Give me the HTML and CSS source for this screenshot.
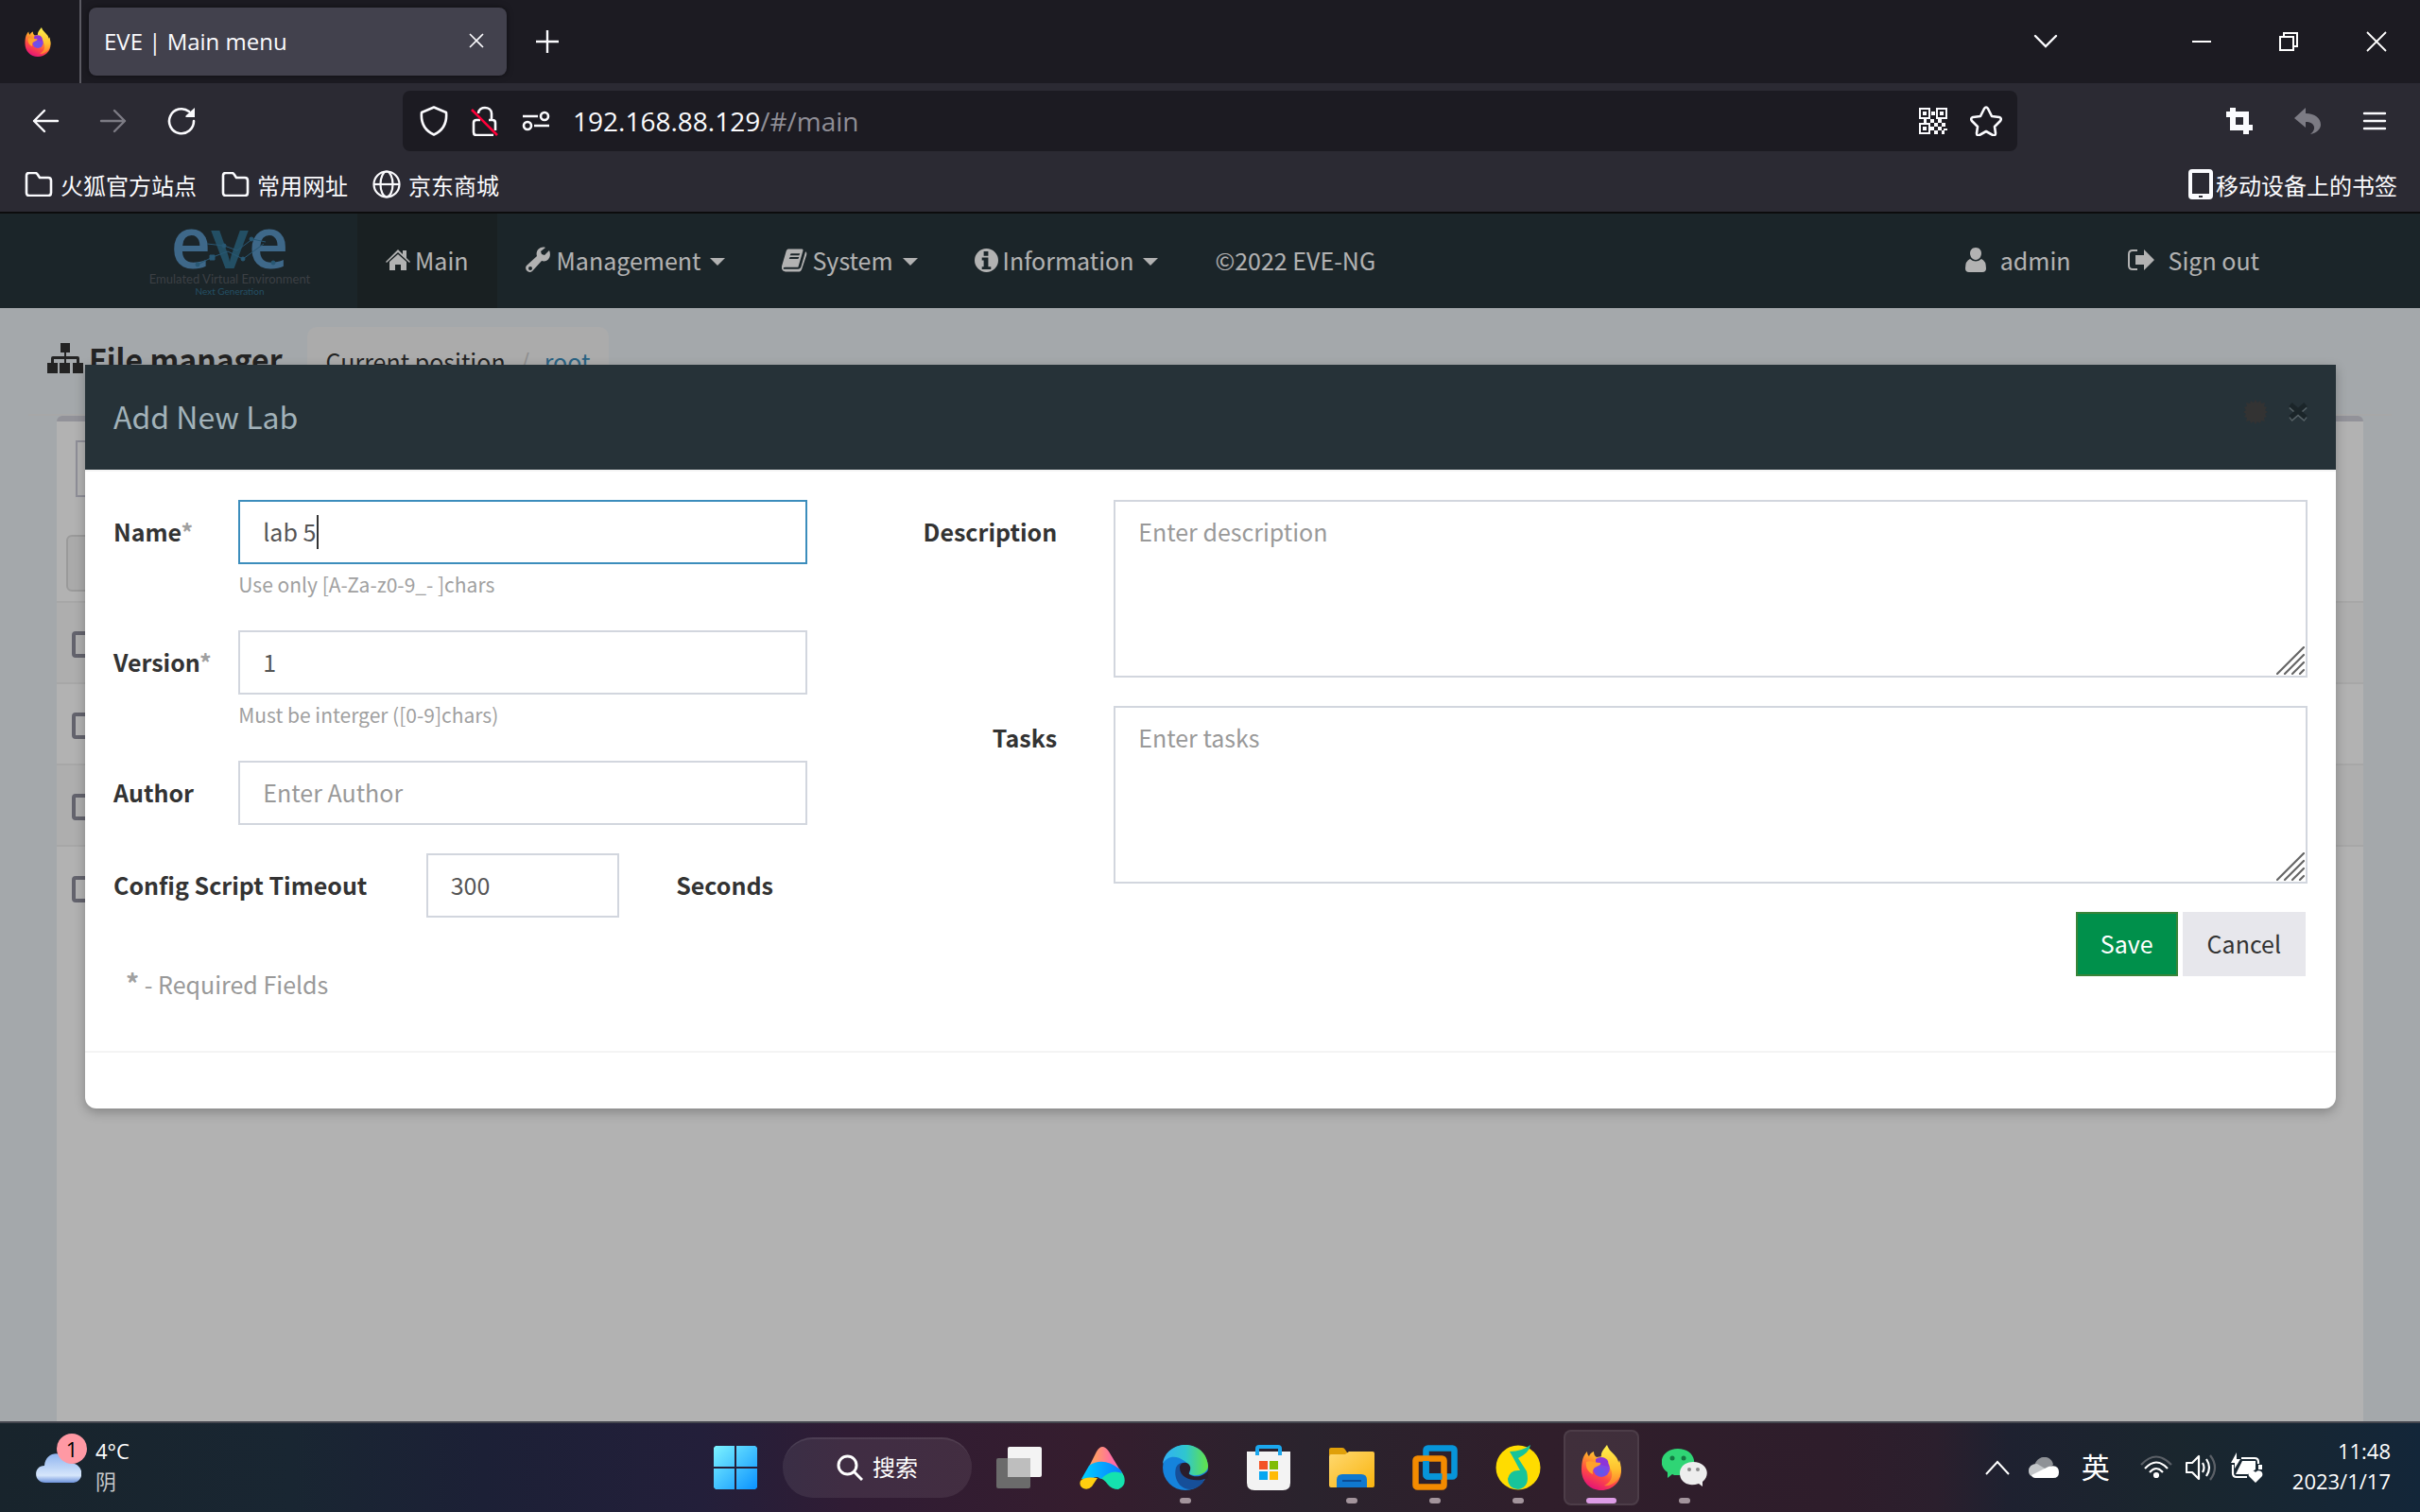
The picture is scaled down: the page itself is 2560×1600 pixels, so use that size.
FILE: index.html
```html
<!DOCTYPE html>
<html lang="en">
<head>
    <meta charset="UTF-8">
    <meta name="viewport" content="width=device-width, initial-scale=1.0">
    <title>EVE | Main menu</title>
    <link rel="stylesheet" href="styles.css">
</head>
<body>
    <svg width="0" height="0" class="defs" aria-hidden="true">
        <defs>
            <linearGradient id="fox-body" x1="0.8" y1="0" x2="0.3" y2="1">
                <stop offset="0" stop-color="#fff44f"/>
                <stop offset="0.35" stop-color="#ffa02a"/>
                <stop offset="0.65" stop-color="#ff4a45"/>
                <stop offset="1" stop-color="#e3107a"/>
            </linearGradient>
            <linearGradient id="fox-flame" x1="0.5" y1="0" x2="0.5" y2="1">
                <stop offset="0" stop-color="#fff14d"/>
                <stop offset="0.6" stop-color="#ffc02e"/>
                <stop offset="1" stop-color="#ff7a30"/>
            </linearGradient>
            <radialGradient id="fox-globe" cx="0.5" cy="0.7" r="0.7">
                <stop offset="0" stop-color="#5b5bea"/>
                <stop offset="1" stop-color="#a234e0"/>
            </radialGradient>
            <symbol id="firefox" viewBox="0 0 42 48">
                <path fill="url(#fox-body)" d="M3 11c1-2 2-3 3-4 0 3 1 4 2 5 1-3 3-4 5-5 0 3 1 5 3 6l12-2C35 14 42 18 42 27c0 12-9 21-21 21S0 39 0 26C0 20 1 14 3 11z"/>
                <path fill="url(#fox-flame)" d="M27 0c2 6 6 8 9 12 2 2 3 5 3 7l1-3c3 8 2 17-3 22-4 4-9 6-13 5 6-3 9-8 8-14-1-7-9-9-11-16C20 8 24 4 27 0z"/>
                <circle cx="21" cy="25" r="9" fill="url(#fox-globe)"/>
                <path fill="#8d35d8" d="M15 15c4-3 10-3 13 2l1 6-14-3z"/>
                <path fill="#ffa12b" d="M5 18c5-2 9 1 15 1 1 2-2 3-4 4-3 1-5 4-4 8-5-2-8-7-7-13z"/>
            </symbol>
        </defs>
    </svg>

    <!-- Browser chrome -->
    <header class="browser">
        <div class="tab-bar">
            <div class="tab-pin"><svg width="30" height="31"><use href="#firefox"/></svg></div>
            <div class="tab">
                <span>EVE | Main menu</span>
                <button class="icon-button" aria-label="Close tab"><svg width="16" height="16" viewBox="0 0 16 16" stroke="#fbfbfe" stroke-width="1.6"><path d="M1 1l14 14M15 1L1 15"/></svg></button>
            </div>
            <button class="icon-button new-tab" aria-label="New tab"><svg width="24" height="24" viewBox="0 0 24 24" stroke="#fbfbfe" stroke-width="2.4"><path d="M12 0v24M0 12h24"/></svg></button>
            <div class="window-buttons">
                <button class="icon-button list-tabs" aria-label="List all tabs"><svg width="26" height="26" viewBox="0 0 26 26" fill="none" stroke="#fbfbfe" stroke-width="2.4" stroke-linecap="round"><path d="M2 7l11 11L24 7"/></svg></button>
                <button class="icon-button" aria-label="Minimize"><svg width="20" height="20" viewBox="0 0 20 20"><path fill="#fff" d="M0 9h20v2H0z"/></svg></button>
                <button class="icon-button" aria-label="Restore"><svg width="20" height="20" viewBox="0 0 20 20" fill="none" stroke="#fff" stroke-width="2"><path d="M1 5h14v14H1zM5 5V1h14v14h-4"/></svg></button>
                <button class="icon-button" aria-label="Close"><svg width="22" height="22" viewBox="0 0 22 22" stroke="#fff" stroke-width="1.8"><path d="M1 1l20 20M21 1L1 21"/></svg></button>
            </div>
        </div>

        <div class="toolbar">
            <div class="nav-buttons">
                <button class="icon-button" aria-label="Back"><svg width="30" height="26" viewBox="0 0 30 26" fill="none" stroke="#fbfbfe" stroke-width="2.4" stroke-linecap="round" stroke-linejoin="round"><path d="M14 2L3 13l11 11M3 13h25"/></svg></button>
                <button class="icon-button" aria-label="Forward"><svg width="30" height="26" viewBox="0 0 30 26" fill="none" stroke="#7c7b84" stroke-width="2.4" stroke-linecap="round" stroke-linejoin="round"><path d="M16 2l11 11-11 11M27 13H2"/></svg></button>
                <button class="icon-button" aria-label="Reload"><svg width="30" height="30" viewBox="0 0 30 30" fill="none" stroke="#fbfbfe" stroke-width="2.6" stroke-linecap="round"><path d="M28 15a13 13 0 1 1-5-10"/><path fill="#fbfbfe" stroke="none" d="M29 1v10h-9c-1 0-1-1 0-2z"/></svg></button>
            </div>
            <div class="url-bar">
                <svg width="30" height="32" viewBox="0 0 30 32" fill="none" stroke="#fbfbfe" stroke-width="2.6" stroke-linejoin="round"><path d="M15 1.500L28 7c1 11-3 19-13 23.500C5 26 1 18 2 7z"/></svg>
                <svg width="30" height="32" viewBox="0 0 30 32" fill="none" stroke="#fbfbfe" stroke-width="2.6"><path d="M8 8c0-8 14-8 14 0v6M26 26V18c0-2-1-3-3-3h-4M10 15H6c-2 0-3 1-3 3v10c0 2 1 3 3 3h18"/><path stroke="#ff0039" d="M1 4l27 27"/></svg>
                <svg width="30" height="22" viewBox="0 0 30 22" fill="none" stroke="#fbfbfe" stroke-width="2.6"><path d="M1 6h16M13 16h16"/><circle cx="24" cy="6" r="4"/><circle cx="6" cy="16" r="4"/></svg>
                <span class="url">192.168.88.129<span>/#/main</span></span>
                <svg width="30" height="28" viewBox="0 0 30 28" fill="#fbfbfe"><path fill-rule="evenodd" d="M0 0h12v12H0zM2 2v8h8V2zM4 4h4v4H4zM18 0h12v12H18zM20 2v8h8V2zM22 4h4v4h-4zM0 16h12v12H0zM2 18v8h8v-8zM4 20h4v4H4z"/><path d="M13 4h4v4h-4zM5 12h3v4H5zM12 12h4v4h-4zM20 12h4v4h-4zM16 16h4v4h-4zM24 16h4v4h-4zM12 20h4v4h-4zM20 20h4v4h-4zM16 24h4v4h-4zM26 22h4v2h-4zM24 24h3v4h-3z"/></svg>
                <svg width="34" height="32" viewBox="0 0 34 32" fill="none" stroke="#fbfbfe" stroke-width="2.6" stroke-linejoin="round"><path d="M15 3q2-3 4 0l4 8 8 1q3 1 1 4l-6 6 1 7q0 3-3 2l-7-4-7 4q-3 1-3-2l1-7-6-6q-2-3 1-4l8-1z"/></svg>
            </div>
            <div class="tool-buttons">
                <button class="icon-button" aria-label="Crop"><svg width="28" height="28" viewBox="0 0 28 28" fill="#fbfbfe" fill-rule="evenodd"><path d="M4 0h6v4h14v14h4v6h-4v4h-6v-4H4V10H0V4h4zM10 10v8h8v-8z"/></svg></button>
                <button class="icon-button" aria-label="Undo"><svg width="28" height="28" viewBox="0 0 28 28" fill="#7c7b84"><path d="M12 0v6c10 0 16 5 16 12 0 5-5 9-11 10 7-5 5-13-5-13v6L0 11z"/></svg></button>
                <button class="icon-button" aria-label="Menu"><svg width="26" height="22" viewBox="0 0 26 22" stroke="#fbfbfe" stroke-width="2.4" stroke-linecap="round"><path d="M2 3h22M2 11h22M2 19h22"/></svg></button>
            </div>
        </div>

        <nav class="bookmarks">
            <a href="#"><svg width="30" height="26" viewBox="0 0 30 26" fill="none" stroke="#fbfbfe" stroke-width="2.6" stroke-linejoin="round"><path d="M2 4q0-3 3-3h6q2 0 3 2l2 3h9q3 0 3 3v13q0 3-3 3H5q-3 0-3-3z"/></svg>火狐官方站点</a>
            <a href="#"><svg width="30" height="26" viewBox="0 0 30 26" fill="none" stroke="#fbfbfe" stroke-width="2.6" stroke-linejoin="round"><path d="M2 4q0-3 3-3h6q2 0 3 2l2 3h9q3 0 3 3v13q0 3-3 3H5q-3 0-3-3z"/></svg>常用网址</a>
            <a href="#"><svg width="30" height="30" viewBox="0 0 30 30" fill="none" stroke="#fbfbfe" stroke-width="2.2"><circle cx="15" cy="15" r="13.500"/><ellipse cx="15" cy="15" rx="6.500" ry="13.500"/><path d="M2 15h26"/></svg>京东商城</a>
            <a href="#" class="mobile"><svg width="26" height="32" viewBox="0 0 26 32" fill="#fbfbfe" fill-rule="evenodd"><path d="M4 0h18q4 0 4 4v24q0 4-4 4H4q-4 0-4-4V4q0-4 4-4zM4 4v22h18V4zM11 28v2h4v-2z"/></svg>移动设备上的书签</a>
        </nav>
    </header>

    <!-- EVE-NG page -->
    <main class="page">
        <nav class="navbar">
            <a href="#" class="brand">
                <span class="brand-name">e<span>v</span>e
                    <svg class="brand-net" width="124" height="44" viewBox="0 0 124 44" fill="#3a7ea6" stroke="#3a7ea6"><path fill="none" d="M38 12l18 2 14 5 16-12 14 3M44 26l16-6 16 8 22-16M28 34l16-8"/><circle cx="56" cy="14" r="2"/><circle cx="85" cy="7" r="2"/><circle cx="76" cy="28" r="2"/><path d="M41 24h5v5h-5z"/><circle cx="28" cy="34" r="2"/><circle cx="108" cy="32" r="2"/></svg>
                </span>
                <span class="brand-line">Emulated Virtual Environment</span>
                <span class="brand-sub">Next Generation</span>
            </a>
            <a href="#" class="nav-item active"><svg width="26" height="22" viewBox="0 0 26 22"><path d="M13 0l5 5V1h4v8l4 4-1 1L13 3 1 14l-1-1zM13 5l9 8v9h-6v-6h-6v6H4v-9z"/></svg>Main</a>
            <a href="#" class="nav-item"><svg width="28" height="28" viewBox="0 0 28 28"><path fill-rule="evenodd" d="M25 4l-5 5-3-1-1-3 5-4c-5-2-11 3-9 9L1 20c-3 4 2 9 6 6l10-11c6 2 11-4 8-11zM5 21a2 2 0 1 1 0 4 2 2 0 0 1 0-4z"/></svg>Management<i class="caret"></i></a>
            <a href="#" class="nav-item"><svg width="27" height="26" viewBox="0 0 28 26"><path fill-rule="evenodd" d="M7 1h15q2 0 1 3l-5 17H4q-3 0-2 2h16q2 0 3-2l5-17q2 1 1 4l-5 15q-1 3-4 3H4q-5-1-4-6L5 3q1-2 2-2zM10 6l-1 2h10l1-2zM9 10l-1 2h10l1-2z"/></svg>System<i class="caret"></i></a>
            <a href="#" class="nav-item"><svg width="25" height="25" viewBox="0 0 26 26"><path fill-rule="evenodd" d="M13 0a13 13 0 1 1 0 26 13 13 0 0 1 0-26zM10 3v5h5V3zM8 10v3h2v7H8v3h10v-3h-3V10z"/></svg>Information<i class="caret"></i></a>
            <a href="#" class="nav-item">©2022 EVE-NG</a>
            <a href="#" class="nav-item user"><svg width="22" height="26" viewBox="0 0 22 26"><path d="M11 0c4 0 6 3 6 6s-2 7-6 7-6-4-6-7 2-6 6-6zM5 12q6 5 12 0 5 2 5 10 0 4-4 4H4q-4 0-4-4Q0 14 5 12z"/></svg>admin</a>
            <a href="#" class="nav-item user"><svg width="28" height="22" viewBox="0 0 28 22"><path d="M10 0v2H5Q2 2 2 5v12q0 3 3 3h5v2H5q-5 0-5-5V5q0-5 5-5zM17 0l11 11-11 11v-6H8V6h9z"/></svg>Sign out</a>
        </nav>

        <section class="content">
            <div class="content-header">
                <h1><svg width="38" height="33" viewBox="0 0 38 33"><path d="M14 0h10v10h-4v4h12q2 0 2 2v5h4v11H27V21h4v-4H20v4h4v11H13V21h5v-4H7v4h4v11H0V21h4v-5q0-2 2-2h12v-4h-4z"/></svg>File manager</h1>
                <div class="breadcrumb">Current position <span>/</span> <a href="#">root</a></div>
            </div>
            <div class="box">
                <div class="box-tools">
                    <input type="text" class="folder-name" aria-label="Folder name">
                </div>
                <button class="folder-button" aria-label="Folder actions"></button>
                <table class="files">
                    <tr><td><input type="checkbox" aria-label="Select item 1"></td></tr>
                    <tr><td><input type="checkbox" aria-label="Select item 2"></td></tr>
                    <tr><td><input type="checkbox" aria-label="Select item 3"></td></tr>
                    <tr><td><input type="checkbox" aria-label="Select item 4"></td></tr>
                </table>
            </div>
        </section>

        <!-- Add lab dialog -->
        <div class="backdrop">
            <div class="modal" role="dialog" aria-labelledby="modal-title">
                <div class="modal-header">
                    <h2 id="modal-title">Add New Lab</h2>
                    <div class="modal-icons">
                        <button class="icon-button" aria-label="Opacity"><svg width="26" height="26" viewBox="0 0 26 26" fill="#333"><path d="M13 0l2 3 3-2 1 3 4-1-1 4 3 1-2 3 3 2-3 2 2 3-3 1 1 4-4-1-1 3-3-2-2 3-2-3-3 2-1-3-4 1 1-4-3-1 2-3-3-2 3-2-2-3 3-1-1-4 4 1 1-3 3 2z"/></svg></button>
                        <button class="icon-button" aria-label="Close dialog"><svg width="20" height="22" viewBox="0 0 20 22" fill="none"><path stroke="#576267" stroke-width="5" d="M2 5l16 14M18 5L2 19"/><path stroke="#1b2529" stroke-width="5" d="M2 3l16 14M18 3L2 17"/></svg></button>
                    </div>
                </div>
                <form class="modal-body">
                    <div class="col-left">
                        <div class="row">
                            <label for="lab-name">Name<span class="star">*</span></label>
                            <div class="field wide">
                                <input type="text" id="lab-name" class="focused" value="lab 5">
                                <i class="text-cursor"></i>
                                <small>Use only [A-Za-z0-9_- ]chars</small>
                            </div>
                        </div>
                        <div class="row">
                            <label for="lab-version">Version<span class="star">*</span></label>
                            <div class="field wide">
                                <input type="text" id="lab-version" value="1">
                                <small>Must be interger ([0-9]chars)</small>
                            </div>
                        </div>
                        <div class="row">
                            <label for="lab-author">Author</label>
                            <div class="field wide"><input type="text" id="lab-author" placeholder="Enter Author"></div>
                        </div>
                        <div class="row">
                            <label for="lab-timeout" class="label-timeout">Config Script Timeout</label>
                            <div class="field narrow"><input type="text" id="lab-timeout" value="300"></div>
                            <span class="unit">Seconds</span>
                        </div>
                        <p class="required"><span class="star">*</span> - Required Fields</p>
                    </div>
                    <div class="col-right">
                        <div class="row">
                            <label for="lab-description">Description</label>
                            <div class="field wide">
                                <textarea id="lab-description" placeholder="Enter description"></textarea>
                                <svg class="grip" width="30" height="30" viewBox="0 0 30 30" stroke="#666" stroke-width="2.2" stroke-linecap="round"><path d="M1 29L29 1M9 29L29 9M17 29l12-12M25 29l4-4"/></svg>
                            </div>
                        </div>
                        <div class="row">
                            <label for="lab-tasks">Tasks</label>
                            <div class="field wide">
                                <textarea id="lab-tasks" placeholder="Enter tasks"></textarea>
                                <svg class="grip" width="30" height="30" viewBox="0 0 30 30" stroke="#666" stroke-width="2.2" stroke-linecap="round"><path d="M1 29L29 1M9 29L29 9M17 29l12-12M25 29l4-4"/></svg>
                            </div>
                        </div>
                        <div class="actions">
                            <button type="button" class="btn btn-save">Save</button>
                            <button type="button" class="btn btn-cancel">Cancel</button>
                        </div>
                    </div>
                </form>
                <div class="modal-footer"></div>
            </div>
        </div>
    </main>

    <!-- Windows taskbar -->
    <footer class="taskbar">
        <div class="weather">
            <div class="weather-icon">
                <svg width="48" height="32" viewBox="0 0 48 32">
                    <defs><linearGradient id="cloud" x1="0" y1="0" x2="0" y2="1"><stop offset="0" stop-color="#8fb4ef"/><stop offset="0.75" stop-color="#d6e6fb"/><stop offset="1" stop-color="#6d93dc"/></linearGradient></defs>
                    <path fill="url(#cloud)" d="M10 32C-3 32-3 14 9 14 10-2 30-3 33 11c19-2 20 21 5 21z"/>
                </svg>
                <span class="badge">1</span>
            </div>
            <div class="weather-text"><div>4°C</div><div class="dim">阴</div></div>
        </div>

        <div class="apps">
            <button class="app" aria-label="Start"><svg width="46" height="46" viewBox="0 0 46 46">
                <defs><linearGradient id="win" gradientUnits="userSpaceOnUse" x1="0" y1="0" x2="46" y2="46"><stop offset="0" stop-color="#7df3ff"/><stop offset="1" stop-color="#0a92ff"/></linearGradient></defs>
                <path fill="url(#win)" d="M2 0h20v22H0V2zM24 0h20l2 2v20H24zM0 24h22v22H2l-2-2zM24 24h22v20l-2 2H24z"/></svg></button>
            <button class="search"><svg width="28" height="28" viewBox="0 0 28 28" fill="none" stroke="#fff" stroke-width="3"><circle cx="11.500" cy="11.500" r="9.500"/><path d="M18 18l9 9"/></svg>搜索</button>
            <button class="app" aria-label="Task view"><svg width="48" height="44" viewBox="0 0 48 44"><rect x="12" width="36" height="32" rx="2" fill="#f4f4f4"/><rect y="12" width="36" height="32" rx="2" fill="#6b6b6b"/><path fill="#bebebe" d="M12 12h24v20H12z"/></svg></button>
            <button class="app" aria-label="Launcher"><svg width="48" height="45" viewBox="0 0 48 45">
                <defs><linearGradient id="a-top"><stop offset="0.2" stop-color="#ff9a6a"/><stop offset="0.7" stop-color="#ff6ba6"/></linearGradient><linearGradient id="a-mid"><stop offset="0" stop-color="#00d0ff"/><stop offset="1" stop-color="#0a7cff"/></linearGradient></defs>
                <path fill="url(#a-top)" d="M18 5q6-10 13 0l15 25-36-9z"/>
                <path fill="#14e2ae" d="M20 33q8-10 16-10 7-2 11 8 3 10-6 14-7 0-11-5-5-7-10-7z"/>
                <path fill="url(#a-mid)" d="M2 34l8-14q15-10 33 4l2 4q-12-5-22 6-5-4-10 0z"/>
                <path fill="#ffcf0f" d="M1 36q4-5 18-3l-6 9q-4 4-9 2-5-3-3-8z"/></svg></button>
            <button class="app" aria-label="Edge"><svg width="48" height="48" viewBox="0 0 48 48">
                <defs><linearGradient id="edge-top"><stop offset="0" stop-color="#31b0f5"/><stop offset="0.5" stop-color="#2fc6cf"/><stop offset="1" stop-color="#63e346"/></linearGradient></defs>
                <circle cx="24" cy="24" r="24" fill="#1583dc"/>
                <path fill="url(#edge-top)" d="M0 20C3-6 45-8 48 22c0 9-13 12-20 9 2-4 2-9-5-14C14 10 4 12 0 20z"/>
                <path fill="#164f99" d="M14 24c2-5 7-6 11-4-6 5-2 18 19 15l-1 4c-6 9-17 10-23 5-6-5-8-13-6-20z"/>
                <path fill="#2a1d2c" d="M18 23c1-5 9-6 11 0 1 4-2 6-1 8 6 4 14 3 20-4v8c-12 5-31 2-30-12z"/></svg><i class="dot"></i></button>
            <button class="app" aria-label="Store"><svg width="46" height="48" viewBox="0 0 46 48"><path fill="#f3f3f3" d="M0 7h46v33q0 8-8 8H8q-8 0-8-8z"/><path fill="none" stroke="#1ba7ee" stroke-width="4" d="M11 11V4q0-2 2-2h20q2 0 2 2v7"/><path fill="#f35325" d="M13 17h9v9h-9z"/><path fill="#81bc06" d="M24 17h9v9h-9z"/><path fill="#05a6f0" d="M13 28h9v9h-9z"/><path fill="#ffba08" d="M24 28h9v9h-9z"/></svg></button>
            <button class="app" aria-label="File Explorer"><svg width="48" height="42" viewBox="0 0 48 42">
                <defs><linearGradient id="folder" x1="0" y1="0" x2="1" y2="1"><stop offset="0" stop-color="#ffd970"/><stop offset="1" stop-color="#f9b40f"/></linearGradient></defs>
                <path fill="#e0a009" d="M0 2q0-2 2-2h12q2 0 3 2l4 6H0z"/><path fill="url(#folder)" d="M0 9q0-2 2-2h15l4-3h25q2 0 2 2v34q0 2-2 2H2q-2 0-2-2z"/><path fill="#0f78cf" d="M8 42V34q0-6 6-6h20q6 0 6 6v8z"/><path stroke="#0a4c94" stroke-width="2" d="M14 35h20"/></svg><i class="dot"></i></button>
            <button class="app" aria-label="VMware"><svg width="48" height="48" viewBox="0 0 48 48" fill="none" stroke-width="6.500"><rect x="14.500" y="3.500" width="30" height="30" rx="2" stroke="#0795d9"/><rect x="3.500" y="14.500" width="30" height="30" rx="2" stroke="#f38b00"/><path stroke="#0795d9" d="M14.500 17v14q0 2.500 3 2.500h14"/></svg><i class="dot"></i></button>
            <button class="app" aria-label="QQ Music"><svg width="48" height="48" viewBox="0 0 48 48"><circle cx="24" cy="24" r="23.500" fill="#ffdc00"/><path fill="#17c49a" d="M15 7q13 0 22-7-1 8-13 14l9 14q4 17-9 19-11-1-11-11 2-10 13-9l-7-13z"/></svg><i class="dot"></i></button>
            <button class="app current" aria-label="Firefox"><svg width="42" height="48"><use href="#firefox"/></svg><i class="dot"></i></button>
            <button class="app" aria-label="WeChat"><svg width="48" height="40" viewBox="0 0 48 40"><path fill="#2fd575" d="M17 0c23 0 23 29 0 28-3 0-5 0-6-1l-5 4 0-6C-6 17 0 0 17 0z"/><circle cx="11" cy="10" r="2.500" fill="#147a43"/><circle cx="23" cy="10" r="2.500" fill="#147a43"/><path fill="#ededed" d="M33 14c15 0 19 14 10 21v5l-4-3c-13 4-20-3-20-11 0-7 6-12 14-12z"/><circle cx="29" cy="22" r="2" fill="#8a8a8a"/><circle cx="38" cy="22" r="2" fill="#8a8a8a"/></svg><i class="dot"></i></button>
        </div>

        <div class="tray">
            <svg width="26" height="16" viewBox="0 0 26 16" fill="none" stroke="#fff" stroke-width="2"><path d="M1 15L13 2l12 13"/></svg>
            <svg width="32" height="22" viewBox="0 0 32 22"><path fill="#8f9297" d="M6 9C9-3 24-3 26 8l-14 9z"/><path fill="#c3c6c9" d="M0 15q0-8 9-8l18 11-21 3q-6-1-6-6z"/><path fill="#fff" d="M3 19l18-9q11-3 11 6 0 6-6 6H7q-3 0-4-3z"/></svg>
            <span class="lang">英</span>
            <div class="tray-group">
                <svg width="34" height="26" viewBox="0 0 34 26" fill="none" stroke="#fff" stroke-width="2.200"><path stroke="#5b6067" d="M1 10Q17-7 33 10"/><path d="M5 14q12-13 24 0M10 18q7-8 14 0"/><circle cx="17" cy="21" r="2" fill="#fff"/></svg>
                <svg width="34" height="28" viewBox="0 0 34 28" fill="none" stroke="#fff" stroke-width="2.200"><path stroke-linejoin="round" d="M1 9h6l7-7v24l-7-7H1zM18 9q3 5 0 10M22 5q6 9 0 18"/><path stroke="#5b6067" d="M26 1q10 13 0 26"/></svg>
                <svg width="34" height="32" viewBox="0 0 34 32"><path fill="none" stroke="#fff" stroke-width="2.200" d="M11 6h14q4 0 4 4v2M2 13v9q0 4 4 4h11"/><path fill="#fff" d="M6 0v7h4L4 17v-6H0zM12 9h14v9l-8 5H5zM29 13h4v5h-4z"/><path fill="#fff" d="M26 32l-7-7c-2-5 4-8 7-4 3-4 9-1 7 4z"/></svg>
            </div>
            <div class="clock"><div>11:48</div><div>2023/1/17</div></div>
        </div>
    </footer>
</body>
</html>
```
FILE: styles.css
```css
* {
    box-sizing: border-box;
}

body {
    margin: 0;
    height: 100vh;
    display: flex;
    flex-direction: column;
    font-family: "Noto Sans CJK SC", "Noto Sans", sans-serif;
    font-size: 25px;
    color: #333;
}

a {
    color: inherit;
    text-decoration: none;
}

svg {
    flex: none;
    display: block;
}

.defs {
    position: absolute;
}

.icon-button {
    display: flex;
    padding: 0;
    border: 0;
    background: none;
}

/* browser */
.browser {
    background: #2b2a33;
    color: #fbfbfe;
    border-bottom: 2px solid #0c0c0d;
}

.tab-bar {
    display: flex;
    align-items: center;
    height: 88px;
    background: #1c1b22;
}

.tab-pin {
    display: flex;
    align-items: center;
    height: 88px;
    width: 86px;
    padding-left: 25px;
    border-right: 2px solid #5b5a62;
}

.tab {
    display: flex;
    align-items: center;
    justify-content: space-between;
    width: 442px;
    height: 72px;
    margin-left: 8px;
    padding: 0 24px 2px 16px;
    border-radius: 8px;
    background: #42414d;
    box-shadow: 0 0 6px rgba(0, 0, 0, 0.5);
    font-family: "Open Sans", sans-serif;
    font-size: 24px;
}

.new-tab {
    margin-left: 31px;
}

.window-buttons {
    display: flex;
    align-items: center;
    gap: 72px;
    margin-left: auto;
    padding-right: 35px;
}

.list-tabs {
    margin-right: 70px;
}

.toolbar {
    display: flex;
    align-items: center;
    height: 80px;
}

.nav-buttons {
    display: flex;
    align-items: center;
    gap: 42px;
    width: 426px;
    padding-left: 33px;
}

.url-bar {
    display: flex;
    align-items: center;
    gap: 24px;
    flex: 1;
    height: 64px;
    padding: 0 16px 0 18px;
    border-radius: 8px;
    background: #1c1b22;
}

.url {
    flex: 1;
    font-family: "Open Sans", sans-serif;
    font-size: 28px;
}

.url span {
    color: #8f8e96;
}

.tool-buttons {
    display: flex;
    align-items: center;
    justify-content: flex-end;
    gap: 44px;
    width: 426px;
    padding-right: 35px;
}

.bookmarks {
    display: flex;
    align-items: center;
    gap: 26px;
    height: 56px;
    padding: 0 24px 2px 26px;
    font-size: 24px;
}

.bookmarks a {
    display: flex;
    align-items: center;
    gap: 8px;
}

.bookmarks .mobile {
    gap: 3px;
    margin-left: auto;
}

/* page */
.page {
    position: relative;
    flex: 1;
    display: flex;
    flex-direction: column;
    background: #ebf1f5;
}

.navbar {
    display: flex;
    height: 100px;
    padding-right: 140px;
    background: #28353b;
    color: #fff;
    fill: #fff;
}

.brand {
    display: flex;
    flex-direction: column;
    align-items: center;
    width: 378px;
    padding: 16px 0 0 108px;
    font-family: "Open Sans", sans-serif;
}

.brand-name {
    position: relative;
    height: 46px;
    line-height: 28px;
    font-size: 74px;
    font-weight: 600;
    color: #5995c4;
}

.brand-name span {
    color: #337290;
}

.brand-net {
    position: absolute;
    left: 0;
    top: 4px;
}

.brand-line {
    line-height: 14px;
    font-family: Lato, sans-serif;
    font-size: 13px;
    color: #565c62;
}

.brand-sub {
    line-height: 12px;
    font-family: Lato, sans-serif;
    font-size: 10px;
    color: #337290;
}

.nav-item {
    display: flex;
    align-items: center;
    gap: 5px;
    padding: 0 30px 2px;
}

.nav-item.active {
    background: #252f32;
}

.nav-item.user {
    gap: 15px;
}

.nav-item:nth-last-child(2) {
    margin-left: auto;
}

.caret {
    margin: 4px 0 0 5px;
    border: 8px solid transparent;
    border-top-color: #fff;
    border-bottom: 0;
}

.content {
    flex: 1;
    display: flex;
    flex-direction: column;
}

.content-header {
    display: flex;
    align-items: flex-start;
    gap: 26px;
    height: 114px;
    margin: 0 30px;
    padding: 20px 20px 0;
    border-bottom: 2px solid #f0eff0;
}

.content-header h1 {
    display: flex;
    align-items: center;
    gap: 6px;
    margin: 0;
    line-height: 66px;
    font-size: 32px;
}

.content-header h1 svg {
    fill: #333;
}

.breadcrumb {
    padding: 0 20px;
    border-radius: 10px;
    background: #f5f5f5;
    line-height: 72px;
}

.breadcrumb span {
    padding: 0 10px;
    color: #ccc;
}

.breadcrumb a {
    color: #3c8dbc;
}

.box {
    flex: 1;
    margin: 0 60px;
    border-top: 6px solid #d2d2db;
    border-radius: 6px 6px 0 0;
    background: #fff;
}

.box-tools {
    padding: 20px 20px 0;
}

.folder-name {
    display: block;
    width: 400px;
    height: 60px;
    border: 2px solid #ccccd8;
    background: #fff;
}

.folder-button {
    display: block;
    width: 100px;
    height: 60px;
    margin: 40px 10px 10px;
    border: 2px solid #ddd;
    border-radius: 6px;
    background: #f4f4f4;
}

.files {
    width: 100%;
    border-collapse: collapse;
}

.files td {
    height: 86px;
    padding: 4px 16px 0;
    border-top: 2px solid #f0f0f0;
}

.files tr:nth-child(odd) {
    background: #f9f9f9;
}

.files input {
    display: block;
    appearance: none;
    width: 28px;
    height: 28px;
    margin: 0;
    border: 4px solid #8f8f9d;
    border-radius: 4px;
}

/* modal */
.backdrop {
    position: absolute;
    inset: 0;
    padding: 160px 89px 0 90px;
    background: rgba(0, 0, 0, 0.3);
}

.modal {
    border-radius: 0 0 12px 12px;
    background: #fff;
    box-shadow: 0 4px 12px rgba(0, 0, 0, 0.25);
}

.modal-header {
    display: flex;
    justify-content: space-between;
    height: 113px;
    padding: 30px 30px 0;
    border-bottom: 2px solid #f4f4f4;
    background: #263238;
    background-clip: padding-box;
}

.modal-header h2 {
    margin: 0;
    line-height: 48px;
    font-size: 32px;
    font-weight: 400;
    color: #a2b2b9;
}

.modal-icons {
    display: flex;
    align-items: center;
    gap: 22px;
    height: 40px;
}

.modal-body {
    display: grid;
    grid-template-columns: 1fr 2fr;
    min-height: 613px;
    padding-top: 30px;
}

.row {
    display: grid;
    grid-template-columns: repeat(12, 1fr);
    margin-bottom: 30px;
}

.row label,
.unit {
    grid-column: span 2;
    padding-left: 30px;
    line-height: 66px;
    font-weight: 700;
    white-space: nowrap;
}

.row .label-timeout {
    grid-column: span 5;
}

.unit {
    grid-column: span 3;
}

.col-right label {
    padding: 0 30px 0 0;
    text-align: right;
}

.star {
    font-weight: 700;
    color: #a0a0a0;
}

.field {
    position: relative;
    padding: 0 30px;
}

.wide {
    grid-column: span 10;
}

.narrow {
    grid-column: span 4;
}

.field input,
.field textarea {
    display: block;
    width: 100%;
    height: 68px;
    padding: 0 24px 2px;
    border: 2px solid #d2d6de;
    border-radius: 0;
    background: #fff;
    font: inherit;
    color: #555;
    outline: none;
}

.field input.focused {
    border-color: #3c8dbc;
}

.field textarea {
    height: 188px;
    padding: 13px 24px;
    line-height: 36px;
    resize: none;
}

.field ::placeholder {
    color: #999;
}

.text-cursor {
    position: absolute;
    left: 113px;
    top: 16px;
    width: 2px;
    height: 36px;
    background: #333;
}

.grip {
    position: absolute;
    right: 33px;
    bottom: 3px;
}

.field small {
    display: block;
    height: 40px;
    line-height: 43px;
    font-size: 21px;
    color: #a0a0a0;
}

.required {
    margin: 0;
    padding-left: 43px;
    line-height: 78px;
    color: #999;
}

.required .star {
    font-size: 28px;
}

.actions {
    display: flex;
    justify-content: flex-end;
    gap: 5px;
    padding-right: 32px;
}

.btn {
    height: 68px;
    padding: 0 24px 2px;
    border: 2px solid #e7e7ec;
    background: #e7e7ec;
    font: inherit;
    color: #333;
}

.btn-save {
    border-color: #398439;
    background: #00904b;
    color: #fff;
}

.modal-footer {
    height: 61px;
    border-top: 2px solid #f4f4f4;
}

/* taskbar */
.taskbar {
    display: grid;
    grid-template-columns: 1fr auto 1fr;
    align-items: center;
    height: 96px;
    border-top: 2px solid #45474f;
    background: linear-gradient(90deg, #18242c, #192632 12%, #1c2036 20%, #231f3a 29%, #301c34 35%, #351d2e 45%, #2a232d 54%, #301e2b 64%, #2e1d2b 76%, #2b1f2d 80%, #1e2130 83%, #1a262e 90%, #132639);
    color: #fff;
    font-family: "Open Sans", "Noto Sans CJK SC", sans-serif;
    font-size: 22px;
    line-height: 32px;
}

.weather {
    display: flex;
    align-items: center;
    gap: 15px;
    padding-left: 38px;
}

.weather-icon {
    position: relative;
}

.weather-text,
.clock {
    padding-bottom: 4px;
}

.badge {
    position: absolute;
    right: -6px;
    top: -20px;
    width: 32px;
    height: 32px;
    border-radius: 50%;
    background: #ff99a4;
    color: #000;
    text-align: center;
}

.dim {
    color: #c5c8ca;
}

.apps {
    display: flex;
    align-items: center;
}

.app {
    position: relative;
    display: flex;
    align-items: center;
    justify-content: center;
    width: 80px;
    height: 80px;
    margin: 0 4px;
    padding: 0;
    border: 2px solid transparent;
    border-radius: 8px;
    background: none;
}

.app.current {
    border-color: rgba(255, 255, 255, 0.07);
    background: rgba(255, 255, 255, 0.08);
}

.dot {
    position: absolute;
    left: 50%;
    bottom: 0;
    width: 12px;
    height: 6px;
    margin-left: -6px;
    border-radius: 3px;
    background: #a3949c;
}

.current .dot {
    width: 32px;
    margin-left: -16px;
    background: #dd9ce6;
}

.search {
    display: flex;
    align-items: center;
    justify-content: center;
    gap: 10px;
    width: 200px;
    height: 64px;
    margin: 0 6px;
    padding: 0 0 2px;
    border: 0;
    border-top: 2px solid rgba(255, 255, 255, 0.08);
    border-radius: 32px;
    background: rgba(255, 255, 255, 0.08);
    color: #fff;
    font: inherit;
    font-size: 24px;
}

.tray {
    display: flex;
    align-items: center;
    justify-content: flex-end;
    padding-right: 31px;
}

.tray svg {
    margin-right: 20px;
}

.lang {
    margin: 0 32px 0 4px;
    font-size: 30px;
}

.tray-group {
    display: flex;
    align-items: center;
    margin-right: 17px;
}

.tray .tray-group svg {
    margin-right: 14px;
}

.clock {
    text-align: right;
}
```
